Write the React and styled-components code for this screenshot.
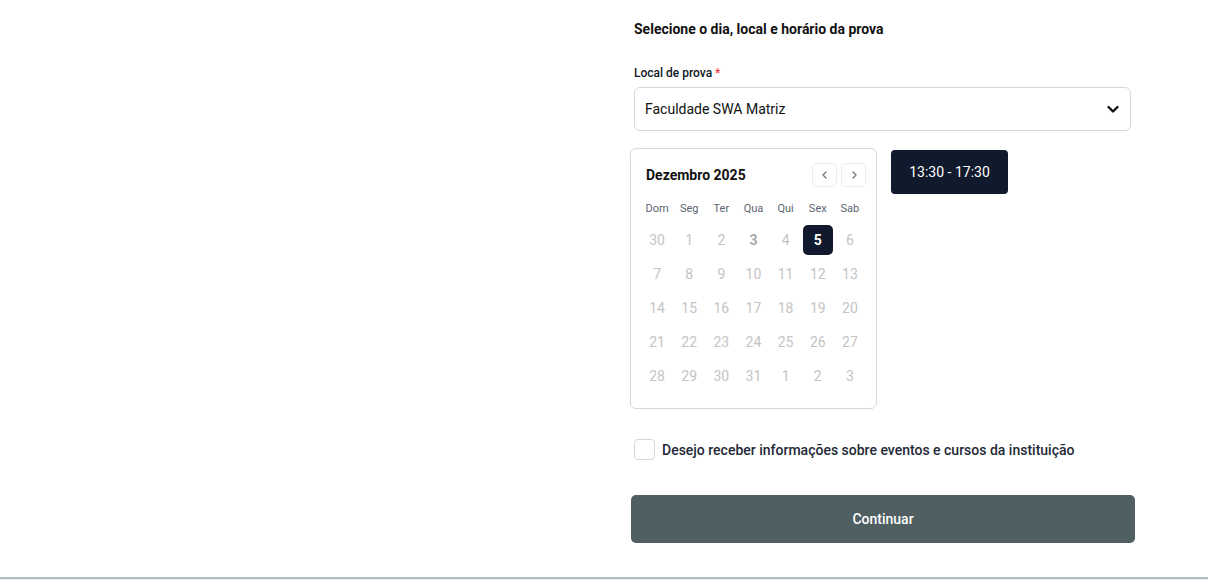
import React from "react";
import styled, { createGlobalStyle } from "styled-components";

const Global = createGlobalStyle`
  html, body { margin: 0; padding: 0; background: #fff; }
  body { font-family: Roboto, "Liberation Sans", Arial, sans-serif; color: #111827; }
  * { box-sizing: border-box; }
`;

const Page = styled.div`
  width: 1208px;
  height: 580px;
  display: flex;
  flex-direction: column;
  overflow: hidden;
`;

const Main = styled.main`
  flex: 1;
  display: grid;
  grid-template-columns: 630px 505px;
`;

const Aside = styled.div``;

const Form = styled.section`
  display: flex;
  flex-direction: column;
  padding-top: 19px;
`;

const Heading = styled.h2`
  margin: 0 0 0 4px;
  font-size: 14px;
  line-height: 20px;
  font-weight: 700;
  color: #111;
`;

const Label = styled.label`
  margin: 26px 0 6px 4px;
  font-size: 12px;
  line-height: 16px;
  font-weight: 500;
  color: #111827;
  span { color: #ef4444; }
`;

const Select = styled.div`
  margin-left: 4px;
  width: 497px;
  height: 44px;
  border: 1px solid #d4d8de;
  border-radius: 6px;
  display: flex;
  align-items: center;
  justify-content: space-between;
  padding: 0 10px 0 10px;
  font-size: 14px;
  color: #111;
`;

const ScheduleRow = styled.div`
  margin-top: 17px;
  display: flex;
  align-items: flex-start;
  gap: 14px;
`;

const Calendar = styled.div`
  width: 247px;
  height: 261px;
  border: 1px solid #d4d8de;
  border-radius: 6px;
  padding: 14px 10px 0;
`;

const CalHeader = styled.div`
  display: flex;
  align-items: center;
  justify-content: space-between;
  height: 24px;
  padding-left: 5px;
`;

const Month = styled.div`
  font-size: 14px;
  font-weight: 700;
  color: #111;
`;

const NavGroup = styled.div`
  display: flex;
  gap: 4px;
`;

const NavButton = styled.button`
  width: 25px;
  height: 24px;
  border: 1px solid #ececec;
  border-radius: 5px;
  background: #fff;
  padding: 0;
  display: flex;
  align-items: center;
  justify-content: center;
  color: #6b7280;
`;

const WeekRow = styled.div`
  margin-top: 11px;
  display: grid;
  grid-template-columns: repeat(7, 1fr);
  height: 20px;
`;

const WeekDay = styled.div`
  display: flex;
  align-items: center;
  justify-content: center;
  font-size: 11px;
  color: #5b6472;
`;

const DayGrid = styled.div`
  margin-top: 7px;
  display: grid;
  grid-template-columns: repeat(7, 1fr);
  grid-auto-rows: 30px;
  row-gap: 4px;
`;

const Day = styled.div`
  display: flex;
  align-items: center;
  justify-content: center;
  font-size: 14px;
  color: ${p => (p.$bold ? "#a9a9a9" : "#c4c4c4")};
  font-weight: ${p => (p.$bold ? 700 : 400)};
`;

const Selected = styled.div`
  width: 30px;
  height: 30px;
  border-radius: 5px;
  background: #111a2c;
  color: #fff;
  font-weight: 700;
  display: flex;
  align-items: center;
  justify-content: center;
`;

const TimeButton = styled.button`
  margin-top: 2px;
  width: 117px;
  height: 44px;
  border: none;
  border-radius: 4px;
  background: #111a2c;
  color: #fff;
  font-family: inherit;
  font-size: 14px;
`;

const CheckRow = styled.label`
  margin: 30px 0 0 4px;
  display: flex;
  align-items: center;
  gap: 7px;
  font-size: 14px;
  font-weight: 500;
  color: #1f2937;
`;

const Box = styled.span`
  width: 21px;
  height: 21px;
  border: 1px solid #d4d8de;
  border-radius: 4px;
`;

const Continue = styled.button`
  margin: 35px 0 0 1px;
  width: 504px;
  height: 48px;
  border: none;
  border-radius: 5px;
  background: #4f5f62;
  color: #fff;
  font-family: inherit;
  font-size: 14px;
  font-weight: 500;
`;

const Footer = styled.footer`
  height: 3px;
  border-top: 2px solid #b3bcc0;
  background: #e6ebee;
`;

const weekDays = ["Dom", "Seg", "Ter", "Qua", "Qui", "Sex", "Sab"];
const days = [
  30, 1, 2, 3, 4, 5, 6,
  7, 8, 9, 10, 11, 12, 13,
  14, 15, 16, 17, 18, 19, 20,
  21, 22, 23, 24, 25, 26, 27,
  28, 29, 30, 31, 1, 2, 3,
];

const Chevron = ({ dir }) => (
  <svg width="10" height="10" viewBox="0 0 10 10" fill="none" stroke="currentColor" strokeWidth="1.3" strokeLinecap="round" strokeLinejoin="round">
    {dir === "left" ? <polyline points="6,2 3,5 6,8" /> : <polyline points="4,2 7,5 4,8" />}
  </svg>
);

export default function App() {
  return (
    <Page>
      <Global />
      <Main>
        <Aside />
        <Form>
          <Heading>Selecione o dia, local e horário da prova</Heading>
          <Label>Local de prova <span>*</span></Label>
          <Select>
            Faculdade SWA Matriz
            <svg width="14" height="14" viewBox="0 0 14 14" fill="none" stroke="#111" strokeWidth="2.4" strokeLinecap="round" strokeLinejoin="round">
              <polyline points="2.5,5 7,9.5 11.5,5" />
            </svg>
          </Select>
          <ScheduleRow>
            <Calendar>
              <CalHeader>
                <Month>Dezembro 2025</Month>
                <NavGroup>
                  <NavButton><Chevron dir="left" /></NavButton>
                  <NavButton><Chevron dir="right" /></NavButton>
                </NavGroup>
              </CalHeader>
              <WeekRow>
                {weekDays.map(w => <WeekDay key={w}>{w}</WeekDay>)}
              </WeekRow>
              <DayGrid>
                {days.map((d, i) => (
                  <Day key={i} $bold={i === 3}>
                    {i === 5 ? <Selected>{d}</Selected> : d}
                  </Day>
                ))}
              </DayGrid>
            </Calendar>
            <TimeButton>13:30 - 17:30</TimeButton>
          </ScheduleRow>
          <CheckRow>
            <Box />
            Desejo receber informações sobre eventos e cursos da instituição
          </CheckRow>
          <Continue>Continuar</Continue>
        </Form>
      </Main>
      <Footer />
    </Page>
  );
}
